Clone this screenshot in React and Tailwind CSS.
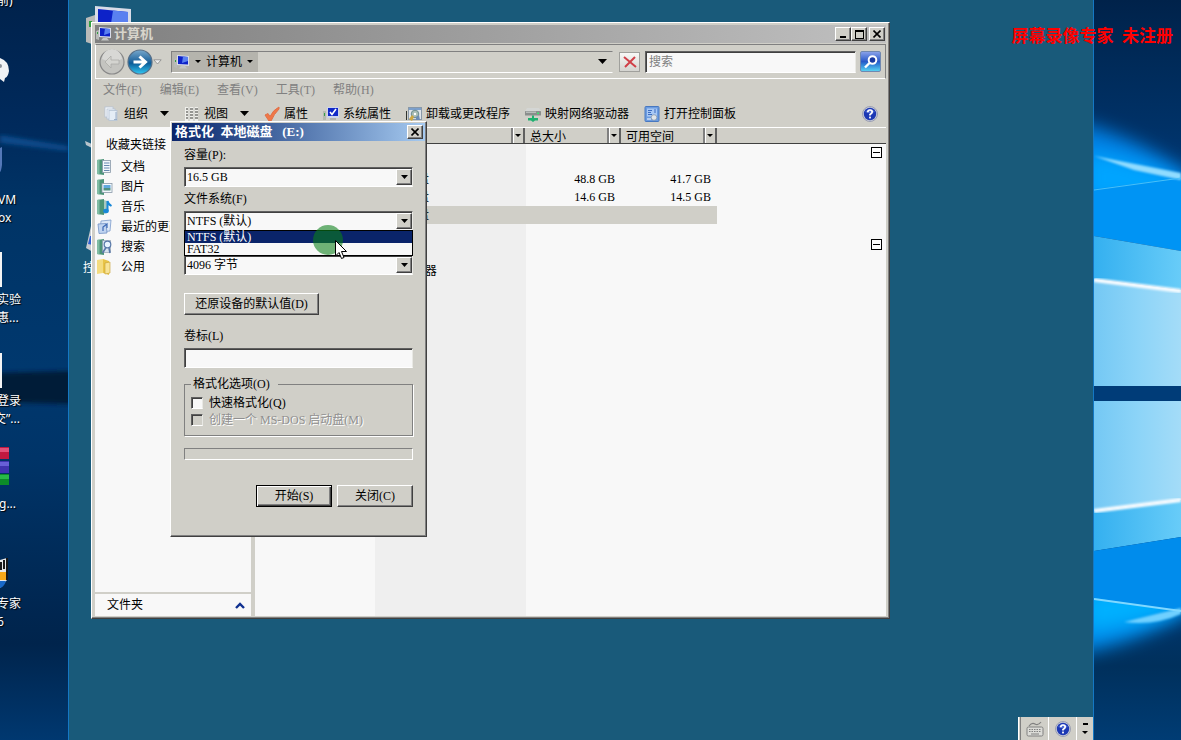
import { useState } from "react";

const RAISED =
  "border border-t-white border-l-white border-r-[#404040] border-b-[#404040] bg-[#d0cfc8] shadow-[inset_-1px_-1px_0_#808080]";
const SUNKEN =
  "border border-t-[#606060] border-l-[#606060] border-r-[#e8e8e4] border-b-white shadow-[inset_1px_1px_0_#404040]";

function Caret({ className = "" }) {
  return (
    <svg width="9" height="5" viewBox="0 0 9 5" className={`shrink-0 ${className}`}>
      <path d="M0 0H9L4.500 5Z" fill="currentColor" />
    </svg>
  );
}

function SmallCaret() {
  return (
    <svg width="6" height="3" viewBox="0 0 6 3" className="shrink-0">
      <path d="M0 0H6L3 3Z" fill="currentColor" />
    </svg>
  );
}

/* ---------- icons ---------- */

function ComputerIcon({ className = "size-4" }) {
  return (
    <svg viewBox="0 0 16 16" className={`shrink-0 ${className}`}>
      <path d="M0 5L3 4V14L0 13Z" fill="#b8bab8" />
      <rect x="1" y="6" width="1" height="2" fill="#30a040" />
      <path d="M3 1L15 2V12L3 11Z" fill="#d8dce8" />
      <path d="M4 2L14 3V10.500L4 10Z" fill="#0d22c8" />
      <path d="M9 2.500L14 3V7L8 9Z" fill="#5a80f0" />
      <path d="M7 12H11L13 14.500H5Z" fill="#c4c6c4" />
    </svg>
  );
}

function PagesIcon() {
  return (
    <svg viewBox="0 0 16 16" className="size-4 shrink-0" stroke="#b4c2d4" strokeWidth=".8">
      <rect x="1" y="1" width="8" height="10" fill="#f8fafc" />
      <rect x="3" y="3" width="8" height="10" fill="#eef4fa" />
      <rect x="5" y="4.500" width="8" height="10" fill="#e4edf6" />
      <path d="M12 6V13M10 13.500H13" stroke="#88a0bc" />
    </svg>
  );
}

function ViewsIcon() {
  return (
    <svg viewBox="0 0 16 16" className="size-4 shrink-0">
      <rect x="1" y="1" width="13" height="14" fill="#f0f0ec" />
      <path d="M2 3H4M2 6H4M2 9H4M2 12H4M6 3H9M6 6H9M6 9H9M6 12H9M11 3H14M11 6H14M11 9H14M11 12H14" stroke="#787874" strokeWidth="1.400" />
      <path d="M5 1V15M10 1V15" stroke="#b4b4ae" strokeWidth=".8" />
    </svg>
  );
}

function CheckIcon() {
  return (
    <svg viewBox="0 0 16 16" className="size-4 shrink-0">
      <path d="M1 9L4 7.500L6 10.500Q9 4 15 1L15 3Q10 8 7 15H5Z" fill="#f07848" stroke="#e07048" />
    </svg>
  );
}

function SystemIcon() {
  return (
    <svg viewBox="0 0 16 16" className="size-4 shrink-0">
      <path d="M0 5H3V14H0Z" fill="#b4bab0" />
      <rect x="1" y="7" width="1" height="3" fill="#38a048" />
      <rect x="4" y="1" width="12" height="11" fill="#ccd4ec" />
      <rect x="5" y="2" width="10" height="8" fill="#1028c8" />
      <path d="M7 6L9 8.500L13 3" fill="none" stroke="#fff" strokeWidth="1.600" />
      <rect x="7" y="12" width="6" height="2" fill="#b0b2ae" />
    </svg>
  );
}

function UninstallIcon() {
  return (
    <svg viewBox="0 0 16 16" className="size-4 shrink-0">
      <path d="M.5 14V5" stroke="#303430" />
      <rect x="2.500" y="1.500" width="13" height="12" fill="#dfe4ea" stroke="#8898a8" />
      <rect x="3" y="2" width="12" height="2" fill="#7ca0cc" />
      <circle cx="9" cy="8" r="3.800" fill="#a8bcb4" stroke="#587c80" strokeWidth=".8" />
      <circle cx="9" cy="8" r="1.200" fill="#fff" />
      <path d="M3 13L6 9L8 11L6 15Z" fill="#d0a840" />
      <path d="M10 11L13 9L14 14H10Z" fill="#6c8cb4" />
    </svg>
  );
}

function DriveIcon() {
  return (
    <svg viewBox="0 0 16 16" className="size-4 shrink-0">
      <path d="M2 2H14L16 5V9H0V5Z" fill="#d4d6d4" />
      <rect x="0" y="5" width="16" height="4.500" rx=".6" fill="#8a8e8c" />
      <rect x="1" y="5.500" width="10" height="1.500" fill="#b8bcba" />
      <rect x="12" y="6.500" width="2" height="1.500" fill="#40e070" />
      <path d="M7 9.500H9V12H13V14.500H10L8 16L6 14.500H3V12H7Z" fill="#20b070" />
    </svg>
  );
}

function PanelIcon() {
  return (
    <svg viewBox="0 0 16 16" className="size-4 shrink-0">
      <rect x="1" y=".5" width="14" height="15" rx="1" fill="#6c9ce0" stroke="#4878c0" />
      <rect x="3" y="2.500" width="10" height="8" fill="#a8c8f4" />
      <path d="M4 4.500H8M4 6.500H7M4 8.500H8M10 4H12M10 6H12" stroke="#3c6cc0" strokeWidth="1.200" />
      <circle cx="10" cy="11.500" r="2.800" fill="#e0e4e8" stroke="#8090a4" strokeWidth=".7" />
      <path d="M3 13H7" stroke="#fff" />
    </svg>
  );
}

function HelpIcon({ className = "size-4" }) {
  return (
    <svg viewBox="0 0 16 16" className={`shrink-0 ${className}`}>
      <circle cx="8" cy="8" r="7.500" fill="#c8ccd8" stroke="#7880a0" strokeWidth=".6" />
      <circle cx="8" cy="8" r="6.200" fill="#1c38b4" />
      <path d="M3 6Q8 0 13 6Q8 8 3 6Z" fill="#6c88e4" opacity=".7" />
      <path d="M5.800 6.200Q5.800 4 8 4Q10.200 4 10.200 6Q10.200 7.200 8 8.500V9.600" fill="none" stroke="#fff" strokeWidth="1.700" />
      <rect x="7.100" y="10.600" width="1.800" height="1.800" fill="#fff" />
    </svg>
  );
}

function LinkIcon({ kind }) {
  if (kind === "public") {
    return (
      <svg viewBox="0 0 16 16" className="size-4 shrink-0">
        <path d="M0 1L6 0V14L0 15Z" fill="#f4dc80" />
        <path d="M6 0L12 2V16L6 14Z" fill="#e8c448" />
        <path d="M8 4L13 3V14L8 15Z" fill="#f8e498" stroke="#c8a030" strokeWidth=".6" />
      </svg>
    );
  }
  if (kind === "recent") {
    return (
      <svg viewBox="0 0 16 16" className="size-4 shrink-0">
        <path d="M4 2L14 1L13 12L3 13Z" fill="#dce8f8" stroke="#7c9ccc" strokeWidth=".8" />
        <path d="M1 5L9 4.500L10 14L2 14.500Z" fill="#c0d4f0" stroke="#7090c4" strokeWidth=".8" />
        <path d="M6 12V8L10 5V9" fill="none" stroke="#3c68b4" strokeWidth="1.200" />
      </svg>
    );
  }
  return (
    <svg viewBox="0 0 16 16" className="size-4 shrink-0">
      <path d="M0 1L7 0V16L0 15Z" fill="#4c9478" />
      <path d="M0 1L2.500 .6V15.400L0 15Z" fill="#80bca4" />
      {kind === "doc" && (
        <>
          <rect x="5.500" y="1.500" width="8" height="12" fill="#f4f8fc" stroke="#8898a8" strokeWidth=".8" />
          <path d="M7 4H12.500M7 6.500H12.500M7 9H12.500M7 11.500H12.500" stroke="#6888b0" />
        </>
      )}
      {kind === "picture" && (
        <>
          <rect x="5" y="4.500" width="10" height="9" fill="#f4f8fc" stroke="#8898a8" strokeWidth=".8" />
          <rect x="6.500" y="6" width="7" height="3" fill="#60a8dc" />
          <rect x="6.500" y="9" width="7" height="2.500" fill="#509080" />
        </>
      )}
      {kind === "music" && (
        <>
          <path d="M7 1L10 2V14L7 15Z" fill="#a8c8c0" />
          <path d="M10.500 12V2Q11 5 14.500 7" fill="none" stroke="#1888d8" strokeWidth="2" />
          <ellipse cx="9" cy="12" rx="2.800" ry="2.200" fill="#1888d8" />
        </>
      )}
      {kind === "search" && (
        <>
          <rect x="5.500" y="1.500" width="8" height="12" fill="#d8e4f0" stroke="#8898a8" strokeWidth=".6" />
          <circle cx="10.500" cy="5.500" r="3.300" fill="#e8f4ff" stroke="#5878a8" strokeWidth="1.200" />
          <path d="M9 8.500L5.500 14M12 9L13 14" stroke="#5878a8" strokeWidth="1.600" />
        </>
      )}
    </svg>
  );
}

/* ---------- host desktop ---------- */

function LeftStrip() {
  return (
    <aside className="relative w-[68px] shrink-0 overflow-hidden bg-[linear-gradient(to_bottom,#00224c_0%,#002a5c_17%,#003466_28%,#00386e_50%,#003468_62%,#002650_83%,#00244c_87%,#003870_100%)] text-xs text-white [text-shadow:1px_1px_1px_#000]">
      <svg viewBox="0 0 68 740" preserveAspectRatio="none" className="absolute inset-0 h-full w-full">
        <defs>
          <filter id="soft">
            <feGaussianBlur stdDeviation="2" />
          </filter>
        </defs>
        <path d="M0 135L68 146V151L0 143Z" fill="#0a4c8c" filter="url(#soft)" />
        <path d="M-5 373L72 371V404L-5 402Z" fill="#001a38" filter="url(#soft)" />
      </svg>
      <svg viewBox="0 0 68 740" className="absolute top-0 left-0 h-[740px] w-[68px]">
        <path d="M0 58Q9 61 9 71Q8 77 5 78L4 82L0 79Z" fill="#f0f2f4" />
        <circle cx="0" cy="66" r="2" fill="#8a9098" />
        <path d="M0 148L2 147V165Q1 172 0 172Z" fill="#5478b8" />
        <rect x="0" y="252" width="2" height="35" fill="#f4f4f4" />
        <rect x="0" y="353" width="2" height="35" fill="#f4f4f4" />
        <rect x="0" y="447" width="9" height="12" fill="#c01840" />
        <rect x="0" y="448" width="9" height="4" fill="#e05078" />
        <rect x="0" y="461" width="9" height="12" fill="#4034b0" />
        <rect x="0" y="462" width="9" height="4" fill="#6860d8" />
        <rect x="0" y="474" width="9" height="11" fill="#0c8c28" />
        <rect x="0" y="475" width="9" height="4" fill="#28b848" />
        <path d="M0 560L7 558V580L0 588Z" fill="#e8e8e8" />
        <path d="M1 562V570M4 560V569M7 558V580" stroke="#181818" strokeWidth="2" />
        <path d="M0 572H6V580H0Z" fill="#f8a818" />
        <path d="M0 581H6Q4 587 0 588Z" fill="#1868c8" />
      </svg>
      <div className="font-['Noto_Sans','Noto_Sans_CJK_SC',sans-serif] leading-[18px]">
        <span className="absolute top-[-8px] left-[-3px]">前)</span>
        <span className="absolute top-[191px] left-[-2px] whitespace-pre">{"VM\nox"}</span>
        <span className="absolute top-[291px] left-[-3px] whitespace-pre">{"实验\n惠..."}</span>
        <span className="absolute top-[392px] left-[-6px] whitespace-pre">{" 登录\n交”..."}</span>
        <span className="absolute top-[495px] left-[-1px]">g...</span>
        <span className="absolute top-[595px] left-[-3px] whitespace-pre">{"专家\n6"}</span>
      </div>
    </aside>
  );
}

function RightStrip() {
  return (
    <aside className="w-[87px] shrink-0 bg-[#002c5c]">
      <svg viewBox="0 0 87 740" preserveAspectRatio="none" className="h-full w-full">
        <defs>
          <linearGradient id="sky" x1="0" y1="0" x2="0" y2="1">
            <stop offset="0" stopColor="#00224a" />
            <stop offset=".08" stopColor="#002a58" />
            <stop offset=".3" stopColor="#003c7c" />
            <stop offset=".75" stopColor="#003c7c" />
            <stop offset=".9" stopColor="#00305c" />
            <stop offset="1" stopColor="#003c74" />
          </linearGradient>
          <linearGradient id="pane" x1="0" y1="0" x2="1" y2="0">
            <stop offset="0" stopColor="#74c8f4" />
            <stop offset=".5" stopColor="#8cd4f8" />
            <stop offset="1" stopColor="#a4dcf8" />
          </linearGradient>
          <linearGradient id="band" x1="0" y1="0" x2="1" y2="0">
            <stop offset="0" stopColor="#34b0f0" />
            <stop offset="1" stopColor="#68ccf8" />
          </linearGradient>
          <filter id="glow" x="-50%" y="-50%" width="200%" height="200%">
            <feGaussianBlur stdDeviation="9" />
          </filter>
          <filter id="edge">
            <feGaussianBlur stdDeviation="1" />
          </filter>
        </defs>
        <rect width="87" height="740" fill="url(#sky)" />
        <path d="M-20 122Q40 134 110 184V205H-20Z" fill="#0080e4" filter="url(#glow)" />
        <path d="M-10 152Q30 154 80 176L90 200H-10Z" fill="#00a4ff" filter="url(#glow)" />
        <path d="M-20 654Q40 646 110 604V580H-20Z" fill="#0088e8" filter="url(#glow)" />
        <path d="M-10 632Q30 628 80 612V590H-10Z" fill="#00b0ff" filter="url(#glow)" />
        <path d="M0 189L87 178V251L0 236Z" fill="#0094f4" />
        <path d="M0 156L87 173V180L40 170Z" fill="#90dcff" filter="url(#edge)" />
        <path d="M0 190L87 178" stroke="#48c0f8" />
        <path d="M0 236L87 251V290L0 279Z" fill="url(#band)" />
        <path d="M0 279L87 290V386H0Z" fill="url(#pane)" />
        <path d="M0 280L87 291" stroke="#f8fcff" strokeWidth="4" filter="url(#edge)" />
        <rect y="386" width="87" height="15" fill="#003c78" />
        <path d="M0 401H87V500L0 511Z" fill="url(#pane)" />
        <path d="M0 511L87 500V537L0 551Z" fill="url(#band)" />
        <path d="M0 511L87 500" stroke="#f8fcff" strokeWidth="4" filter="url(#edge)" />
        <path d="M0 551L87 537V611L0 598Z" fill="#008cec" />
        <path d="M30 622L87 608V614Q60 626 30 622Z" fill="#70d0ff" filter="url(#edge)" />
        <path d="M0 599L87 611" stroke="#80d8ff" strokeWidth="2" />
      </svg>
    </aside>
  );
}

/* ---------- explorer window ---------- */

function TitleBar() {
  return (
    <header className="flex h-[18px] shrink-0 items-center gap-0.5 bg-linear-to-r from-[#808080] to-[#c0c0c0] px-px">
      <ComputerIcon />
      <h1 className="flex-1 text-[13px] leading-4 font-bold text-[#d8d5cc]">计算机</h1>
      <div className="flex">
        <button type="button" aria-label="最小化" className={`flex h-[14px] w-4 items-end justify-center pb-0.5 ${RAISED}`}>
          <span className="h-0.5 w-1.5 bg-black" />
        </button>
        <button type="button" aria-label="最大化" className={`flex h-[14px] w-4 items-center justify-center ${RAISED}`}>
          <span className="h-[9px] w-[9px] border border-t-2 border-black" />
        </button>
        <button type="button" aria-label="关闭" className={`ml-0.5 flex h-[14px] w-4 items-center justify-center ${RAISED}`}>
          <CrossGlyph />
        </button>
      </div>
    </header>
  );
}

function CrossGlyph() {
  return (
    <svg width="8" height="8" viewBox="0 0 8 8">
      <path d="M.5 .5L7.500 7.500M7.500 .5L.5 7.500" stroke="#000" strokeWidth="1.600" />
    </svg>
  );
}

function AddressBar() {
  return (
    <div className="mt-px flex h-[35px] shrink-0 items-center border border-t-[#808080] border-l-white border-r-[#808080] border-b-white bg-[#d0cfc8] pr-1 pl-[3px]">
      <button type="button" aria-label="后退">
        <svg width="26" height="26" viewBox="0 0 26 26">
          <circle cx="13" cy="13" r="12" fill="#c4c4c0" stroke="#888" strokeWidth="1.200" />
          <path d="M3 10A10 10 0 0 1 23 10Q13 15 3 10Z" fill="#d8d8d5" />
          <path d="M12 7L6 13L12 19V15H20V11H12Z" fill="#d4d4d0" stroke="#a8a8a4" strokeWidth=".7" />
        </svg>
      </button>
      <button type="button" aria-label="前进" className="ml-0.5">
        <svg width="26" height="26" viewBox="0 0 26 26">
          <defs>
            <linearGradient id="fwd" x1="0" y1="0" x2="0" y2="1">
              <stop offset="0" stopColor="#78a8cc" />
              <stop offset=".45" stopColor="#2468a0" />
              <stop offset=".55" stopColor="#0c5c98" />
              <stop offset="1" stopColor="#30c8f4" />
            </linearGradient>
          </defs>
          <circle cx="13" cy="13" r="12" fill="url(#fwd)" stroke="#587088" strokeWidth="1.200" />
          <path d="M6.500 13H18M12.500 7.500L18.500 13L12.500 18.500" fill="none" stroke="#fff" strokeWidth="3" />
        </svg>
      </button>
      <button type="button" aria-label="最近的页面" className="w-[18px]">
        <svg width="9" height="6" viewBox="0 0 9 6">
          <path d="M.8 .8H8.200L4.500 5Z" fill="#eee" stroke="#888" strokeWidth=".8" />
        </svg>
      </button>
      <nav className="flex h-[22px] flex-1 items-center border border-t-[#808080] border-l-[#808080] border-r-transparent border-b-white text-xs">
        <div className="flex h-full items-center gap-[5px] bg-[#b5b4ad] pr-[5px] pl-0.5">
          <ComputerIcon />
          <SmallCaret />
          <button type="button">计算机</button>
          <SmallCaret />
        </div>
        <button type="button" aria-label="以前的位置" className="ml-auto flex w-5 justify-center">
          <Caret />
        </button>
      </nav>
      <button
        type="button"
        aria-label="停止"
        className="ml-1.5 flex h-5 w-[21px] items-center justify-center border border-[#a0a09c] bg-linear-to-b from-[#f8f8f6] to-[#d4d4d0]"
      >
        <svg width="14" height="12" viewBox="0 0 14 12">
          <path d="M1 1L13 11M12 1L2 11" stroke="#d04048" strokeWidth="2" />
        </svg>
      </button>
      <input
        type="search"
        aria-label="搜索"
        placeholder="搜索"
        className={`ml-[5px] h-[22px] w-[211px] bg-[#f8f8f8] px-[3px] pt-0.5 text-xs placeholder:text-[#808080] ${SUNKEN}`}
      />
      <button
        type="button"
        aria-label="开始搜索"
        className="ml-1 flex h-[21px] w-[21px] items-center justify-center rounded-xs border border-[#7088b0] bg-linear-to-b from-[#88a0e8] via-[#2858c8] to-[#58d0f0]"
      >
        <svg width="16" height="16" viewBox="0 0 16 16">
          <circle cx="9.500" cy="6" r="3.800" fill="#1838a0" stroke="#fff" strokeWidth="2" />
          <path d="M6.500 9L2 13.500" stroke="#fff" strokeWidth="2.400" />
        </svg>
      </button>
    </div>
  );
}

const menus = ["文件(F)", "编辑(E)", "查看(V)", "工具(T)", "帮助(H)"];

const tools = [
  { label: "组织", Icon: PagesIcon, menu: true },
  { label: "视图", Icon: ViewsIcon, menu: true },
  { label: "属性", Icon: CheckIcon },
  { label: "系统属性", Icon: SystemIcon },
  { label: "卸载或更改程序", Icon: UninstallIcon },
  { label: "映射网络驱动器", Icon: DriveIcon },
  { label: "打开控制面板", Icon: PanelIcon },
];

const links = [
  { label: "文档", kind: "doc" },
  { label: "图片", kind: "picture" },
  { label: "音乐", kind: "music" },
  { label: "最近的更改", kind: "recent" },
  { label: "搜索", kind: "search" },
  { label: "公用", kind: "public" },
];

const disks = [
  { name: "本地磁盘 (C:)", type: "本地磁盘", total: "48.8 GB", free: "41.7 GB" },
  { name: "本地磁盘 (D:)", type: "本地磁盘", total: "14.6 GB", free: "14.5 GB" },
  { name: "本地磁盘 (E:)", type: "本地磁盘", total: "", free: "", selected: true },
];

function GroupRow({ title }) {
  return (
    <tr className="h-[26px] align-top">
      <th colSpan={4} scope="rowgroup" className="pl-2 text-left font-normal text-[#1c3c90]">
        {title}
      </th>
      <td className="pt-[3px] pr-1">
        <button
          type="button"
          aria-label="折叠"
          className="ml-auto flex size-[11px] items-center justify-center border border-black bg-white"
        >
          <span className="h-px w-[7px] bg-black" />
        </button>
      </td>
    </tr>
  );
}

function DiskTable() {
  return (
    <table className="w-full table-fixed border-collapse text-xs leading-4">
      <colgroup>
        <col className="w-[120px]" />
        <col className="w-[150px]" />
        <col className="w-24" />
        <col className="w-24" />
        <col />
      </colgroup>
      <thead>
        <tr className="h-[17px] bg-[#d0cfc8] shadow-[inset_0_1px_0_#fff,inset_0_-1px_0_#404040]">
          {["名称", "类型", "总大小", "可用空间"].map((label) => (
            <th key={label} scope="col" className="p-0 font-normal">
              <div className="flex h-[17px] items-center pl-[5px]">
                <span className="flex-1 pt-0.5 text-left">{label}</span>
                <button
                  type="button"
                  aria-label={`${label}筛选`}
                  className="flex h-[15px] w-[14px] items-center justify-center border-r-2 border-l-2 border-l-[#808080] border-r-[#606060] shadow-[inset_1px_0_0_#fff]"
                >
                  <SmallCaret />
                </button>
              </div>
            </th>
          ))}
          <td />
        </tr>
      </thead>
      <tbody>
        <GroupRow title="硬盘 (3)" />
        {disks.map((d) => (
          <tr key={d.name} className="h-[18px]">
            <td className={`p-0 pl-6 ${d.selected ? "bg-[#d0cfc8]" : ""}`}>{d.name}</td>
            <td className={`p-0 pl-1.5 ${d.selected ? "bg-[#d0cfc8]" : ""}`}>{d.type}</td>
            <td className={`p-0 pr-1.5 text-right ${d.selected ? "bg-[#d0cfc8]" : ""}`}>{d.total}</td>
            <td className={`p-0 pr-1.5 text-right ${d.selected ? "bg-[#d0cfc8]" : ""}`}>{d.free}</td>
            <td />
          </tr>
        ))}
        <tr className="h-3">
          <td colSpan={5} />
        </tr>
        <GroupRow title="有可移动存储的设备 (1)" />
        <tr className="h-[18px]">
          <td className="p-0 pl-6">CD 驱动器</td>
          <td className="p-0 pl-1.5">CD 驱动器</td>
          <td colSpan={3} />
        </tr>
      </tbody>
    </table>
  );
}

function ExplorerWindow() {
  return (
    <section
      className={`absolute top-[22px] right-[203px] bottom-[121px] left-[22px] flex flex-col px-[3px] pt-0.5 pb-0.5 ${RAISED}`}
    >
      <TitleBar />
      <AddressBar />
      <nav className="flex h-5 shrink-0 items-center gap-[18px] pt-px pl-2 text-xs text-[#808080]">
        {menus.map((m) => (
          <button key={m} type="button">
            {m}
          </button>
        ))}
      </nav>
      <div className="flex h-7 shrink-0 items-center gap-[15px] pt-px pr-2 pl-[9px] text-xs whitespace-nowrap">
        {tools.map(({ label, Icon, menu }) => (
          <button key={label} type="button" className="flex items-center gap-1">
            <Icon />
            {label}
            {menu && <Caret className="ml-2" />}
          </button>
        ))}
        <button type="button" aria-label="帮助" className="ml-auto">
          <HelpIcon />
        </button>
      </div>
      <div className="flex min-h-0 flex-1">
        <aside className="flex w-[156px] shrink-0 flex-col bg-[#f8f8f8] text-xs">
          <h2 className="mt-[10px] pl-[11px] leading-4">收藏夹链接</h2>
          <ul className="mt-1 flex-1 pl-0.5">
            {links.map((l) => (
              <li key={l.label}>
                <a href="#" className="flex h-5 items-center gap-2 whitespace-nowrap">
                  <LinkIcon kind={l.kind} />
                  {l.label}
                </a>
              </li>
            ))}
          </ul>
          <button
            type="button"
            className="flex h-6 items-center justify-between border-t-2 border-[#d0cfc8] pr-1.5 pl-3"
          >
            文件夹
            <svg width="10" height="7" viewBox="0 0 10 7">
              <path d="M1 6L5 2L9 6" fill="none" stroke="#103090" strokeWidth="2.400" />
            </svg>
          </button>
        </aside>
        <div className="w-1 shrink-0 bg-[#d0cfc8]" />
        <div className="min-w-0 flex-1 bg-[linear-gradient(to_right,#f8f8f8_120px,#efefef_120px,#efefef_271px,#f8f8f8_271px)]">
          <DiskTable />
        </div>
      </div>
    </section>
  );
}

/* ---------- format dialog ---------- */

function Combo({ id, label, value, options, onChange, children }) {
  return (
    <div className="relative mb-1">
      <label htmlFor={id} className="mb-[3px] block leading-[17px]">
        {label}
      </label>
      <div className={`flex h-5 items-stretch bg-[#f8f8f8] ${SUNKEN}`}>
        <select
          id={id}
          value={value}
          onChange={(e) => onChange?.(e.target.value)}
          className="min-w-0 flex-1 appearance-none bg-transparent pl-0.5 leading-4 outline-none"
        >
          {options.map((o) => (
            <option key={o}>{o}</option>
          ))}
        </select>
        <span className={`pointer-events-none my-px flex w-4 items-center justify-center ${RAISED}`}>
          <svg width="7" height="4" viewBox="0 0 7 4">
            <path d="M0 0H7L3.500 4Z" />
          </svg>
        </span>
      </div>
      {children}
    </div>
  );
}

function FormatDialog() {
  const [fs, setFs] = useState("NTFS (默认)");
  const [label, setLabel] = useState("");
  const [quick, setQuick] = useState(false);
  const systems = ["NTFS (默认)", "FAT32"];

  return (
    <section
      role="dialog"
      aria-label="格式化 本地磁盘 (E:)"
      className={`absolute top-[121px] left-[101px] w-[257px] p-px text-xs ${RAISED}`}
    >
      <header className="flex h-[18px] items-center justify-between bg-linear-to-r from-[#0a246a] to-[#a6caf0] pr-0.5 pl-[3px]">
        <h2 className="text-[13px] leading-4 font-bold whitespace-pre text-white">{"格式化  本地磁盘   (E:)"}</h2>
        <button type="button" aria-label="关闭" className={`flex h-[14px] w-4 items-center justify-center ${RAISED}`}>
          <CrossGlyph />
        </button>
      </header>

      <form className="px-3 pt-1.5 pb-7" onSubmit={(e) => e.preventDefault()}>
        <Combo id="capacity" label="容量(P):" value="16.5 GB" options={["16.5 GB"]} />
        <Combo id="fs" label="文件系统(F)" value={fs} options={systems} onChange={setFs}>
          <ul role="listbox" className="absolute top-[39px] right-0 left-0 z-10 border border-black bg-[#f8f8f8]">
            {systems.map((s) => (
              <li
                key={s}
                role="option"
                aria-selected={s === fs}
                onClick={() => setFs(s)}
                className={s === fs ? "h-3 bg-[#0a246a] pl-0.5 leading-3 text-white" : "h-3 pl-0.5 leading-3"}
              >
                {s}
              </li>
            ))}
          </ul>
        </Combo>
        <Combo id="unit" label="分配单元大小(A)" value="4096 字节" options={["4096 字节"]} />

        <button type="button" className={`mt-[18px] flex h-[22px] w-[135px] items-center justify-center ${RAISED}`}>
          还原设备的默认值(D)
        </button>

        <label htmlFor="volume" className="mt-[13px] block leading-4">
          卷标(L)
        </label>
        <input
          id="volume"
          type="text"
          value={label}
          onChange={(e) => setLabel(e.target.value)}
          className={`mt-1 block h-5 w-full bg-[#f8f8f8] px-1 ${SUNKEN}`}
        />

        <fieldset className="mt-2 border border-[#808080] px-1.5 pb-[7px] shadow-[1px_1px_0_#fff]">
          <legend className="pr-2 pl-0.5 leading-4">格式化选项(O)</legend>
          <label className="mt-0.5 flex h-[17px] items-center gap-1.5">
            <input
              type="checkbox"
              checked={quick}
              onChange={(e) => setQuick(e.target.checked)}
              className={`size-3 appearance-none bg-[#f8f8f8] checked:bg-[#0a246a] ${SUNKEN}`}
            />
            快速格式化(Q)
          </label>
          <label className="flex h-[17px] items-center gap-1.5 text-[#909090] [text-shadow:1px_1px_0_#fff]">
            <input type="checkbox" disabled className={`size-3 appearance-none bg-[#d0cfc8] ${SUNKEN}`} />
            创建一个 MS-DOS 启动盘(M)
          </label>
        </fieldset>

        <div
          role="progressbar"
          aria-label="格式化进度"
          aria-valuenow={0}
          className="mt-3 h-3 border border-t-[#808080] border-l-[#808080] border-r-white border-b-white"
        />

        <div className="mt-[25px] flex justify-end gap-[5px]">
          <button
            type="submit"
            className="flex h-[22px] w-[76px] items-center justify-center border border-black shadow-[inset_1px_1px_0_#fff,inset_-1px_-1px_0_#404040,inset_-2px_-2px_0_#808080]"
          >
            开始(S)
          </button>
          <button type="button" className={`flex h-[22px] w-[76px] items-center justify-center ${RAISED}`}>
            关闭(C)
          </button>
        </div>
      </form>
    </section>
  );
}

function Pointer() {
  return (
    <div className="pointer-events-none absolute top-[225px] left-[244px] z-20">
      <svg width="36" height="36" viewBox="0 0 36 36">
        <circle cx="15" cy="15" r="15" fill="#0a8018" opacity=".58" />
        <path d="M22.500 15.500V31L26 27.500L28.500 33.500L31 32.500L28.500 26.500H33.500Z" fill="#fff" stroke="#000" />
      </svg>
    </div>
  );
}

function LanguageBar() {
  return (
    <footer className="absolute right-0 bottom-0 flex h-[23px] items-stretch bg-[#d0cfc8]">
      <span className="w-[3px] border-r border-l border-l-white border-r-[#808080]" />
      <button type="button" aria-label="键盘" className="flex w-7 items-center justify-center border-r border-white">
        <svg width="18" height="16" viewBox="0 0 18 16">
          <path d="M3 5Q6 1 9 3T15 1" fill="none" stroke="#808080" strokeWidth="1.200" />
          <rect x="1" y="6" width="16" height="9" rx="1.500" fill="#dcdcd8" stroke="#808080" />
          <path d="M3 8.500H15M3 10.500H15" stroke="#808080" strokeDasharray="1.500 1" />
          <path d="M5 13H13" stroke="#808080" />
        </svg>
      </button>
      <button type="button" aria-label="帮助" className="flex w-7 items-center justify-center border-r border-white">
        <HelpIcon />
      </button>
      <button type="button" aria-label="选项" className="flex w-4 flex-col items-center justify-center gap-1.5">
        <span className="h-0.5 w-[5px] bg-black" />
        <SmallCaret />
      </button>
    </footer>
  );
}

export default function App() {
  return (
    <div className="relative flex h-screen overflow-hidden bg-[#002c5c] font-['Liberation_Serif','Noto_Sans_CJK_SC',serif] text-black">
      <LeftStrip />
      <main className="relative min-w-0 flex-1 overflow-hidden border-r border-l border-[#1478c4] bg-[#195a7a]">
        <div className="absolute top-[3px] left-[17px]">
          <ComputerIcon className="size-12" />
        </div>
        <svg width="12" height="200" viewBox="0 0 12 200" className="absolute top-[136px] left-[14px]">
          <path d="M2 5L9 8V12L3 9Z" fill="#b8c4cc" />
          <path d="M8 90L3 112L10 116V92Z" fill="#c8ccd0" />
          <path d="M7 100L5 108L10 109V100Z" fill="#3060d0" />
        </svg>
        <span className="absolute top-[260px] left-[14px] text-xs text-white">控制面板</span>
        <ExplorerWindow />
        <FormatDialog />
        <Pointer />
        <LanguageBar />
      </main>
      <RightStrip />
      <p className="absolute top-[25px] right-2 text-[17px] leading-6 font-bold whitespace-pre text-[#f00]">
        {"屏幕录像专家  未注册"}
      </p>
    </div>
  );
}
